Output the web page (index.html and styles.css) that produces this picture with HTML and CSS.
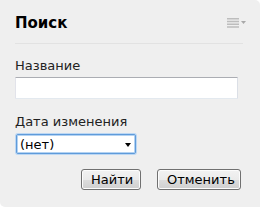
FILE: index.html
```html
<!DOCTYPE html>
<html lang="ru">
<head>
<meta charset="utf-8">
<link rel="stylesheet" href="styles.css">
</head>
<body>
<div class="panel">
  <div class="head">
    <h1 class="title">Поиск</h1>
    <span class="menu">
      <svg width="20" height="10" viewBox="0 0 20 10">
        <rect x="0" y="0" width="12" height="1.5" fill="#bdbdbd"/>
        <rect x="0" y="2.75" width="12" height="1.5" fill="#bdbdbd"/>
        <rect x="0" y="5.5" width="12" height="1.5" fill="#bdbdbd"/>
        <rect x="0" y="8.25" width="12" height="1.5" fill="#bdbdbd"/>
        <path d="M14 3 H19 L16.5 6 Z" fill="#a8a8a8"/>
      </svg>
    </span>
  </div>
  <div class="field">
    <label class="label" for="name">Название</label>
    <input class="text" id="name" type="text">
  </div>
  <div class="field">
    <label class="label" for="date">Дата изменения</label>
    <div class="select-wrap">
      <select class="select" id="date"><option>(нет)</option></select>
      <span class="arrow"></span>
    </div>
  </div>
  <div class="buttons">
    <button class="btn btn-find">Найти</button>
    <button class="btn btn-cancel">Отменить</button>
  </div>
</div>
</body>
</html>
```
FILE: styles.css
```css
html, body {
  margin: 0;
  padding: 0;
  background: #ffffff;
}
.panel {
  box-sizing: border-box;
  width: 260px;
  height: 207px;
  background: #efefef;
  border-radius: 0 5px 0 5px;
  padding: 14px 17px 0 15px;
  font-family: "DejaVu Sans", Verdana, sans-serif;
  color: #222;
}
.head {
  display: flex;
  align-items: center;
  justify-content: space-between;
  padding-bottom: 11px;
  border-bottom: 1px solid #e2e2e2;
}
.title {
  margin: 0;
  font-size: 15px;
  line-height: 18px;
  font-weight: bold;
  color: #000;
}
.menu {
  display: flex;
  margin-right: -4px;
}
.menu svg { display: block; }
.field {
  display: flex;
  flex-direction: column;
  align-items: flex-start;
  margin-top: 14px;
}
.field + .field { margin-top: 15px; }
.label {
  font-size: 13px;
  line-height: 16px;
  margin-bottom: 3px;
  color: #222;
}
.text {
  box-sizing: border-box;
  width: 223px;
  height: 22px;
  margin: 0;
  background: #fff;
  border: 1px solid;
  border-color: #abadb3 #dbdfe6 #e3e9ef #e2e3ea;
  border-radius: 1px;
  padding: 2px 3px;
  font: 13px "DejaVu Sans", sans-serif;
}
.select-wrap {
  position: relative;
  display: flex;
  margin-left: 1px;
  margin-top: 1px;
}
.select {
  -webkit-appearance: none;
  appearance: none;
  box-sizing: border-box;
  width: 120px;
  height: 20px;
  margin: 0;
  background: #fff;
  border: 1px solid #5f9bda;
  border-radius: 2px;
  box-shadow: 0 0 0 1px #bcd7f3, inset 0 0 0 1px #b3d2f2;
  padding: 0 0 0 3px;
  font: 13px "DejaVu Sans", sans-serif;
  color: #000;
  outline: none;
}
.arrow {
  position: absolute;
  left: 109px;
  top: 9px;
  width: 0;
  height: 0;
  border-left: 3.5px solid transparent;
  border-right: 3.5px solid transparent;
  border-top: 4px solid #000;
}
.buttons {
  display: flex;
  justify-content: flex-end;
  gap: 16px;
  margin-top: 15px;
  margin-right: 2px;
}
.btn {
  box-sizing: border-box;
  height: 21px;
  margin: 0;
  padding: 0 9px;
  border: 1px solid #707070;
  border-radius: 3px;
  background: linear-gradient(to bottom, #f2f2f2 0%, #ebebeb 50%, #dddddd 51%, #cfcfcf 100%);
  box-shadow: inset 0 0 0 1px #fcfcfc;
  font: 13px "DejaVu Sans", sans-serif;
  color: #000;
  line-height: 18px;
}
.btn-find { width: 60px; }
.btn-cancel { width: 84px; }
```
